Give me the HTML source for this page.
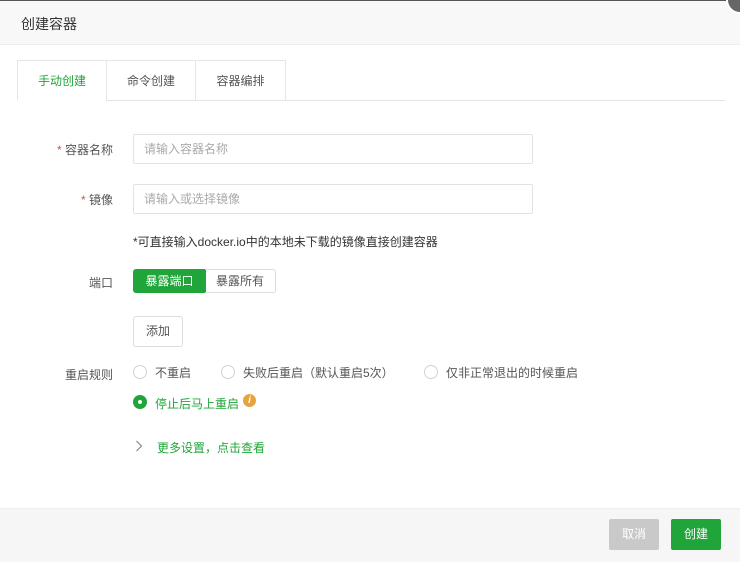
<!DOCTYPE html><html><head><meta charset="utf-8"><style>
*{box-sizing:border-box;margin:0;padding:0}
body{width:740px;height:562px;background:#fff;font-family:"Liberation Sans","Noto Sans CJK SC",sans-serif;font-size:12px;color:#555;position:relative;overflow:hidden}
.a{position:absolute}
.hd{left:0;top:0;width:740px;height:45px;background:#f8f8f8;border-bottom:1px solid #eee;border-top:1px solid #555}
.hd span{position:absolute;left:21px;top:13px;font-size:14px;color:#333}
.tabline{left:17px;top:100px;width:708px;height:1px;background:#e6e6e6}
.tab{top:60px;height:41px;border:1px solid #e6e6e6;background:#fff;line-height:40px;text-align:center;font-size:12px;color:#555}
.lbl{width:113px;left:0;text-align:right;font-size:12px;color:#555}
.inp{left:133px;width:400px;height:30px;border:1px solid #e2e2e2;border-radius:2px;padding-left:10px;line-height:28px;color:#aaa}
.r{width:14px;height:14px;border:1px solid #d2d2d2;border-radius:50%}
.btn{height:31px;border-radius:2px;color:#fff;line-height:31px;text-align:center}
</style></head><body>
<div class="a hd"><span>创建容器</span></div>
<div class="a" style="left:726px;top:-14px;width:28px;height:28px;border-radius:50%;background:#666;border:2px solid #fff"></div>
<div class="a tabline"></div>
<div class="a tab" style="left:17px;width:90px;border-bottom-color:#fff;color:#20a53a">手动创建</div>
<div class="a tab" style="left:106px;width:90px">命令创建</div>
<div class="a tab" style="left:195px;width:91px">容器编排</div>
<div class="a lbl" style="top:141px"><span style="color:#e74c3c">*</span> 容器名称</div>
<div class="a inp" style="top:134px">请输入容器名称</div>
<div class="a lbl" style="top:191px"><span style="color:#e74c3c">*</span> 镜像</div>
<div class="a inp" style="top:184px">请输入或选择镜像</div>
<div class="a" style="left:133px;top:233px;color:#333">*可直接输入docker.io中的本地未下载的镜像直接创建容器</div>
<div class="a lbl" style="top:274px">端口</div>
<div class="a" style="left:133px;top:269px;width:73px;height:24px;background:#20a53a;border-radius:3px 0 0 3px;color:#fff;text-align:center;line-height:24px">暴露端口</div>
<div class="a" style="left:205px;top:269px;width:71px;height:24px;border:1px solid #ddd;border-left:none;border-radius:0 3px 3px 0;text-align:center;line-height:22px;color:#555">暴露所有</div>
<div class="a" style="left:133px;top:316px;width:50px;height:31px;border:1px solid #ddd;border-radius:3px;text-align:center;line-height:29px">添加</div>
<div class="a lbl" style="top:366px">重启规则</div>
<div class="a r" style="left:133px;top:365px"></div><div class="a" style="left:155px;top:364px">不重启</div>
<div class="a r" style="left:221px;top:365px"></div><div class="a" style="left:243px;top:364px">失败后重启（默认重启5次）</div>
<div class="a r" style="left:424px;top:365px"></div><div class="a" style="left:446px;top:364px">仅非正常退出的时候重启</div>
<div class="a" style="left:133px;top:395px;width:14px;height:14px;border-radius:50%;background:#20a53a"><div class="a" style="left:5px;top:5px;width:4px;height:4px;border-radius:50%;background:#fff"></div></div>
<div class="a" style="left:155px;top:395px;color:#20a53a">停止后马上重启</div>
<div class="a" style="left:243px;top:394px;width:13px;height:13px;border-radius:50%;background:#e8a33d;color:#fff;font-size:10px;font-style:italic;text-align:center;line-height:13px;font-weight:bold">i</div>
<svg class="a" style="left:135px;top:440px" width="8" height="12" viewBox="0 0 8 12"><path d="M1.5 1L6.5 6L1.5 11" fill="none" stroke="#888" stroke-width="1.2"/></svg>
<div class="a" style="left:157px;top:439px;color:#20a53a">更多设置，点击查看</div>
<div class="a" style="left:0;top:508px;width:740px;height:54px;background:#f6f6f6;border-top:1px solid #eee"></div>
<div class="a btn" style="left:609px;top:519px;width:50px;background:#c9c9c9">取消</div>
<div class="a btn" style="left:671px;top:519px;width:50px;background:#20a53a">创建</div>
</body></html>
